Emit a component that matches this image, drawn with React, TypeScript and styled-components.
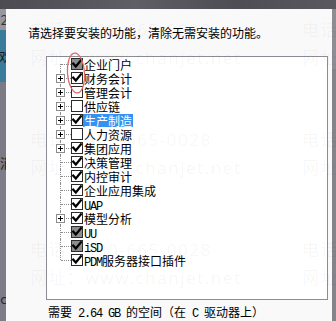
import React from "react";
import styled, { createGlobalStyle, css } from "styled-components";

const CJK = `"Noto Sans CJK SC", "Noto Sans", sans-serif`;

const Global = createGlobalStyle`
  html, body { margin: 0; padding: 0; background: #55535a; }
  body { width: 336px; height: 321px; overflow: hidden; }
  svg { display: block; }
`;

const Screen = styled.div`
  position: relative;
  width: 336px;
  height: 321px;
  overflow: hidden;
  display: grid;
  grid-template-columns: 6px 326px 4px;
  grid-template-rows: 9px 312px;
  background: #57555c;
  font-family: ${CJK};
  line-height: 14px;
`;

const TopBar = styled.div`
  grid-column: 1 / -1;
  background: linear-gradient(90deg, #4c4b52, #5f5d65 40%, #4e4d54 70%, #5a5960);
`;

const SideStrip = styled.div`
  display: flex;
  flex-direction: column;
  overflow: hidden;
`;

const StripBlock = styled.div<{ $h?: number; $bg: string; $align?: string }>`
  flex: ${(p) => (p.$h ? `0 0 ${p.$h}px` : "1 1 auto")};
  background: ${(p) => p.$bg};
  display: flex;
  flex-direction: column;
  justify-content: ${(p) => p.$align || "center"};
  align-items: flex-end;
  overflow: hidden;
  font-size: 13px;
  line-height: 14px;
  color: #1a1a1a;
  white-space: nowrap;
`;

const Fragment = styled.span<{ $shift: number; $color?: string; $top?: number }>`
  margin-right: ${(p) => p.$shift}px;
  margin-top: ${(p) => p.$top || 0}px;
  color: ${(p) => p.$color || "#1a1a1a"};
`;

const Dialog = styled.div`
  background: #f9f9fa;
  display: flex;
  flex-direction: column;
  align-items: flex-start;
  padding: 16px 0 0 22px;
`;

const Heading = styled.div`
  font-size: 12px;
  line-height: 16px;
  color: #000;
  white-space: nowrap;
`;

const TreeBox = styled.div`
  margin: 15px 0 0 18px;
  width: 282px;
  height: 244px;
  box-sizing: border-box;
  border: 1px solid #8a8d94;
  background: #fff;
  display: flex;
  flex-direction: column;
`;

type Pos = "first" | "mid" | "last";

const Row = styled.div`
  display: grid;
  grid-template-columns: 24px 12px auto;
  align-items: center;
  height: 14px;
  justify-content: start;
`;

const Connector = styled.div<{ $pos: Pos }>`
  position: relative;
  align-self: stretch;
  &::before {
    content: "";
    position: absolute;
    left: 13px;
    top: ${(p) => (p.$pos === "first" ? "7px" : "0")};
    height: ${(p) => (p.$pos === "mid" ? "14px" : "7px")};
    border-left: 1px dotted #8e8e8e;
  }
  &::after {
    content: "";
    position: absolute;
    left: 14px;
    right: 0;
    top: 7px;
    border-top: 1px dotted #8e8e8e;
  }
`;

const PlusHolder = styled.span`
  position: absolute;
  left: 9px;
  top: 3px;
  width: 9px;
  height: 9px;
  z-index: 1;
  display: block;
  line-height: 0;
`;

const Box = styled.span<{ $gray: boolean }>`
  width: 12px;
  height: 12px;
  box-sizing: border-box;
  border: 1px solid #2b2b2b;
  background: ${(p) => (p.$gray ? "#8d8d8d" : "#fff")};
  display: flex;
  align-items: center;
  justify-content: center;
`;

const Label = styled.span<{ $selected?: boolean }>`
  font-size: 12px;
  line-height: 13px;
  height: 13px;
  padding: 0 1px;
  color: #000;
  white-space: nowrap;
  ${(p) =>
    p.$selected &&
    css`
      background: #3592f0;
      color: #fff;
    `}
`;

const Ascii = styled.span`
  font-family: "Liberation Mono", monospace;
  font-size: 12px;
  letter-spacing: -1.2px;
`;

const Footer = styled.div`
  margin: 5px 0 0 20px;
  font-size: 12px;
  line-height: 14px;
  color: #000;
  white-space: nowrap;
`;

const Overlay = styled.div`
  position: absolute;
  inset: 0;
  pointer-events: none;
`;

const Mark = styled.span`
  position: absolute;
  font-family: "Noto Sans", "Noto Sans CJK SC", sans-serif;
  font-size: 17px;
  line-height: 22px;
  letter-spacing: 1.5px;
  color: rgba(0, 0, 0, 0.045);
  white-space: nowrap;
`;

const AnnotationSvg = styled.svg`
  position: absolute;
  left: 0;
  top: 0;
  width: 336px;
  height: 321px;
  pointer-events: none;
`;

const Plus = () => (
  <PlusHolder>
    <svg width="9" height="9" viewBox="0 0 9 9" shapeRendering="crispEdges">
      <rect x="0.5" y="0.5" width="8" height="8" fill="#fff" stroke="#8c8c8c" />
      <path d="M2 4.5H7M4.5 2V7" stroke="#000" strokeWidth="1" />
    </svg>
  </PlusHolder>
);

const Check = () => (
  <svg width="10" height="10" viewBox="0 0 10 10">
    <path d="M1.2 4.6 L3.8 7.5 L8.9 1.3" fill="none" stroke="#000" strokeWidth="2.2" strokeLinecap="square" />
  </svg>
);

type Item = {
  label: React.ReactNode;
  plus?: boolean;
  checked?: boolean;
  gray?: boolean;
  selected?: boolean;
};

const items: Item[] = [
  { label: "企业门户", checked: true, gray: true },
  { label: "财务会计", plus: true, checked: true },
  { label: "管理会计", plus: true },
  { label: "供应链", plus: true },
  { label: "生产制造", plus: true, checked: true, selected: true },
  { label: "人力资源", plus: true },
  { label: "集团应用", plus: true, checked: true },
  { label: "决策管理", checked: true },
  { label: "内控审计", checked: true },
  { label: "企业应用集成", checked: true },
  { label: <Ascii>UAP</Ascii>, checked: true },
  { label: "模型分析", plus: true, checked: true },
  { label: <Ascii>UU</Ascii>, checked: true, gray: true },
  { label: <Ascii>iSD</Ascii>, checked: true, gray: true },
  {
    label: (
      <>
        <Ascii>PDM</Ascii>服务器接口插件
      </>
    ),
    checked: true,
  },
];

const marks: { text: string; x: number; y: number }[] = [];
[0, 110, 220].forEach((dy) => {
  [30, 302].forEach((x) => {
    marks.push({ text: "电话：400-665-0028", x, y: 19 + dy });
    marks.push({ text: "网址：www.chanjet.net", x, y: 47 + dy });
  });
});

export default function App() {
  return (
    <>
      <Global />
      <Screen>
        <TopBar />
        <SideStrip>
          <StripBlock $h={21} $bg="#98979f">
            <Fragment $shift={-2} $color="#333">2</Fragment>
          </StripBlock>
          <StripBlock $h={52} $bg="#3b7b9c">
            <Fragment $shift={-6}>欢</Fragment>
          </StripBlock>
          <StripBlock $h={88} $bg="#7c7b85" $align="flex-end">
            <Fragment $shift={-7}>消</Fragment>
          </StripBlock>
          <StripBlock $bg="#7e7d87" $align="flex-start">
            <Fragment $shift={-1} $color="#2a2a2a" $top={122}>
              c
            </Fragment>
          </StripBlock>
        </SideStrip>
        <Dialog>
          <Heading>请选择要安装的功能，清除无需安装的功能。</Heading>
          <TreeBox>
            {items.map((it, i) => {
              const pos: Pos = i === 0 ? "first" : i === items.length - 1 ? "last" : "mid";
              return (
                <Row key={i}>
                  <Connector $pos={pos}>{it.plus && <Plus />}</Connector>
                  <Box $gray={!!it.gray}>{it.checked && <Check />}</Box>
                  <Label $selected={it.selected}>{it.label}</Label>
                </Row>
              );
            })}
          </TreeBox>
          <Footer>
            需要<Ascii> 2.64 GB </Ascii>的空间（在<Ascii> C </Ascii>驱动器上）
          </Footer>
        </Dialog>
        <SideStrip>
          <StripBlock $h={60} $bg="#8e8d93" />
          <StripBlock $bg="#85848b" />
        </SideStrip>
        <Overlay>
          {marks.map((m, i) => (
            <Mark key={i} style={{ left: m.x, top: m.y }}>
              {m.text}
            </Mark>
          ))}
        </Overlay>
        <AnnotationSvg viewBox="0 0 336 321">
          <ellipse
            cx="76"
            cy="73"
            rx="8.5"
            ry="20"
            transform="rotate(-4 76 73)"
            fill="none"
            stroke="#e06868"
            strokeWidth="1.2"
          />
        </AnnotationSvg>
      </Screen>
    </>
  );
}
